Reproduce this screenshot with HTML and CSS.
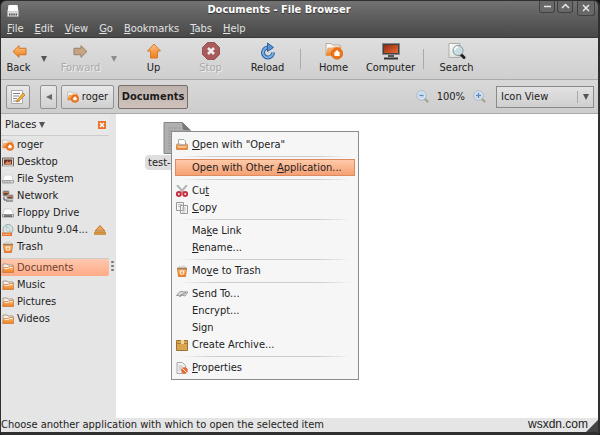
FILE: index.html
```html
<!DOCTYPE html>
<html lang="en">
<head>
<meta charset="utf-8">
<title>Documents - File Browser</title>
<link rel="stylesheet" href="styles.css">
</head>
<body>
<svg class="defs" aria-hidden="true">
  <defs>
    <linearGradient id="orange" x1="0" y1="0" x2="0" y2="1"><stop offset="0" stop-color="#fbc386"/><stop offset="1" stop-color="#ef7d17"/></linearGradient>
    <linearGradient id="paper" x1="0" y1="0" x2="1" y2="1"><stop offset="0" stop-color="#fff"/><stop offset="1" stop-color="#d4d4d0"/></linearGradient>
    <linearGradient id="screen" x1="0" y1="0" x2="1" y2="1"><stop offset="0" stop-color="#8d2c10"/><stop offset="1" stop-color="#ee6c35"/></linearGradient>
    <symbol id="folder" viewBox="0 0 12 12"><path d="M1 10V2h4l1 1h5v3" fill="#f7efe7" stroke="#a99787"/><path d="M.7 10.5 2 5.5h4l1-1h4.5v6z" fill="url(#orange)" stroke="#c67438" stroke-width=".7"/><path d="M2.5 6.4h4l1-1h3.2" fill="none" stroke="#fff0dc"/></symbol>
    <symbol id="home" viewBox="0 0 18 18"><path d="M1 13V1.5h5L7.500 3H15v9z" fill="#fbf7f2" stroke="#b8a99d"/><path d="M1 13.500 3 6h5l1-1h7l-1 8.500z" fill="url(#orange)" stroke="#df9151" stroke-width=".6"/><circle cx="12" cy="11.500" r="5.700" fill="#ef7418" stroke="#d95b08" stroke-width=".6"/><path d="M8.500 11.500 12 8l3.500 3.500h-1V14h-5v-2.500z" fill="#fff"/></symbol>
    <symbol id="drive" viewBox="0 0 12 12"><path d="M2.500 2h7l2 5.500H.5z" fill="#fdfdfd" stroke="#c5c5c5" stroke-width=".6"/><path d="M.5 7.500h11V10H.5z" fill="#dcdcdc" stroke="#888" stroke-width=".7"/><path d="M2 9h7" stroke="#888" stroke-dasharray="1 .6"/></symbol>
    <symbol id="floppy" viewBox="0 0 12 12"><path d="M2.500 2h7l2 5.500H.5z" fill="#fff" stroke="#bbb" stroke-width=".6"/><path d="M.5 7.500h11V10H.5z" fill="#ddd" stroke="#777" stroke-width=".7"/><path d="M2 9h8" stroke="#222"/></symbol>
    <symbol id="desktop" viewBox="0 0 12 12"><path d="M.5 2h11v8H.5z" fill="#d9d0c8" stroke="#6e625c"/><path d="M2 3.500h8v5H2z" fill="#6c3328"/><path d="m2.500 8 3-3 1.500 1.500L9 4.500V8z" fill="#df8a5b"/><path d="M1 10h10" stroke="#eee"/></symbol>
    <symbol id="network" viewBox="0 0 12 12"><path d="M1 1h6v5H1zM5 5h6v4H5z" fill="#704737" stroke="#aaa"/><path d="M2 2.500h4M6 6.500h4" stroke="#cd7b51"/><path d="M2 7v3h3M4 11h7" fill="none" stroke="#555"/></symbol>
    <symbol id="disc" viewBox="0 0 12 12"><circle cx="6" cy="5.500" r="5" fill="#d9e4e4" stroke="#9daaaa"/><path d="M6 5.500 2 2l3-1.500zM6 5.500 10.500 8 8 10z" fill="#9fd5d6"/><circle cx="6" cy="5.500" r="1.500" fill="#fff" stroke="#999" stroke-width=".6"/><path d="M0 8.500h10V12H0z" fill="#ea742f"/><path d="M1 10.300h7" stroke="#ffd7b9" stroke-dasharray="1 .5"/></symbol>
    <symbol id="trash" viewBox="0 0 12 12"><path d="M1.500 4h9l-1 7.500h-7z" fill="url(#orange)" stroke="#c7682b" stroke-width=".7"/><path d="m2 3 2-2 2 1 2-1.500L10 3z" fill="#f7f3ed" stroke="#aaa" stroke-width=".5"/><path d="M1 3.500h10" stroke="#a87b58" stroke-width="1.500"/><circle cx="6" cy="7.500" r="1.800" fill="none" stroke="#fff1dd" stroke-width="1.100"/></symbol>
    <symbol id="arrow" viewBox="0 0 16 14"><path d="M1 7 7.500.7v2.800H15v7H7.500v2.800z"/></symbol>
    <symbol id="zoom-glass" viewBox="0 0 13 13"><path d="m8.500 8.500 3 3" stroke="#a6a391" stroke-width="2.200" stroke-linecap="round"/><circle cx="5.500" cy="5.500" r="4.700" fill="#e9f1f7" stroke="#9fb2c4"/><circle cx="5.500" cy="5.500" r="3.300" fill="#c3d8ec"/></symbol>
  </defs>
</svg>

<div class="window">
  <header class="chrome">
    <div class="titlebar">
      <svg class="app-icon" viewBox="0 0 12 12" aria-hidden="true"><path d="M1.500 0h9l1 7H.5z" fill="#fff"/><path d="M.5 6.500h11v5H.5z" fill="#ddd" stroke="#aaa" stroke-width=".5"/><path d="M2 9.500h8" stroke="#555" stroke-width="2" stroke-dasharray="1.500 .7"/></svg>
      <h1 class="title">Documents - File Browser</h1>
      <div class="controls">
        <button class="control" aria-label="Minimize"><svg viewBox="0 0 14 11"><path d="M4 5.500h7"/></svg></button>
        <button class="control" aria-label="Maximize"><svg viewBox="0 0 14 11"><path d="m4 7 3.500-3.500L11 7"/></svg></button>
        <button class="control close-window" aria-label="Close"><svg viewBox="0 0 16 14"><path d="m5 4 6 6m0-6-6 6"/></svg></button>
      </div>
    </div>
    <nav class="menubar" aria-label="Menu bar">
      <button><u>F</u>ile</button><button><u>E</u>dit</button><button><u>V</u>iew</button><button><u>G</u>o</button><button><u>B</u>ookmarks</button><button><u>T</u>abs</button><button><u>H</u>elp</button>
    </nav>
  </header>

  <div class="toolbar" role="toolbar" aria-label="Navigation">
    <button class="tool narrow"><svg class="tool-icon" viewBox="0 0 18 18"><use href="#arrow" x="2" y="3" width="15" height="13" fill="url(#orange)" stroke="#cf6d19"/></svg>Back</button>
    <button class="history" aria-label="Back history"><svg viewBox="0 0 6 6"><path d="M0 0h6L3 6z"/></svg></button>
    <button class="tool" disabled><svg class="tool-icon" viewBox="0 0 18 18"><g transform="matrix(-1 0 0 1 18 0)"><use href="#arrow" x="2" y="3" width="15" height="13" fill="#c4a482" stroke="#967c63"/></g></svg>Forward</button>
    <button class="history dim" aria-label="Forward history"><svg viewBox="0 0 6 6"><path d="M0 0h6L3 6z"/></svg></button>
    <button class="tool"><svg class="tool-icon" viewBox="0 0 18 18"><path d="m9 2 6.500 7H12.500v7h-7V9H2.500z" fill="url(#orange)" stroke="#d77a2d"/></svg>Up</button>
    <button class="tool" disabled><svg class="tool-icon" viewBox="0 0 18 18"><path d="M5.500.5h7l5 5v7l-5 5h-7l-5-5v-7z" fill="#a95b5b" stroke="#955555"/><path d="m6 6 6 6m0-6-6 6" stroke="#eee" stroke-width="2.500"/></svg>Stop</button>
    <button class="tool"><svg class="tool-icon" viewBox="0 0 18 18"><path d="M14 10.500A5 5 0 1 1 9.500 5.500" fill="none" stroke="#2e5f9f" stroke-width="4"/><path d="M14 10.500A5 5 0 1 1 9.500 5.500" fill="none" stroke="#79aee5" stroke-width="2"/><path d="m8.500 1 6 4.500-6 4z" fill="#5b94d4" stroke="#2e5f9f"/></svg>Reload</button>
    <span class="divider"></span>
    <button class="tool"><svg class="tool-icon"><use href="#home"/></svg>Home</button>
    <button class="tool"><svg class="tool-icon" viewBox="0 0 18 18"><path d="M.5 1.500h17v11H.5z" fill="#424242" stroke="#888"/><path d="M2 3h14v8H2z" fill="url(#screen)"/><path d="M6 13h6v2H6z" fill="#555"/><path d="M2 16.500h14" stroke="#333" stroke-width="2"/></svg>Computer</button>
    <span class="divider"></span>
    <button class="tool"><svg class="tool-icon" viewBox="0 0 18 18"><path d="M1 1.500h11v14H1z" fill="url(#paper)" stroke="#aaa"/><path d="m12.500 12 3.500 3.500" stroke="#222" stroke-width="3" stroke-linecap="round"/><circle cx="10" cy="8.500" r="5" fill="#c9dde4" stroke="#8b9799"/><path d="M7 8a3 3 0 0 1 3-3" fill="none" stroke="#fff" stroke-width="1.500"/></svg>Search</button>
  </div>

  <div class="locationbar">
    <button class="loc edit" aria-label="Edit location"><svg viewBox="0 0 16 16"><path d="M1.500 1.500h11v13h-11z" fill="#fff" stroke="#aaa"/><path d="M3 4.500h7M3 7h6M3 9.500h4M3 12h7" stroke="#888"/><path d="m7 11 6-7 2 2-6 6-2.500 1z" fill="#f5ad35" stroke="#a87227" stroke-width=".7"/></svg></button>
    <div class="path">
      <button class="loc scroll" aria-label="Earlier folders"><svg viewBox="0 0 6 6"><path d="M6 0v6L0 3z"/></svg></button>
      <button class="loc folder"><svg class="icon"><use href="#home"/></svg>roger</button>
      <button class="loc current" aria-pressed="true">Documents</button>
    </div>
    <div class="zoom">
      <button aria-label="Zoom out"><svg viewBox="0 0 13 13"><use href="#zoom-glass"/><path d="M3.500 5.500h4" stroke="#5b87b7" stroke-width="1.200"/></svg></button>
      <span>100%</span>
      <button aria-label="Zoom in"><svg viewBox="0 0 13 13"><use href="#zoom-glass"/><path d="M3 5.500h5M5.500 3v5" stroke="#5b87b7" stroke-width="1.200"/></svg></button>
    </div>
    <div class="view">
      <select aria-label="View mode"><option>Icon View</option><option>List View</option></select>
      <svg class="view-arrow" viewBox="0 0 6 6" aria-hidden="true"><path d="M0 0h6L3 6z"/></svg>
    </div>
  </div>

  <div class="content">
    <aside class="sidebar">
      <div class="side-head">
        <button class="places">Places <svg viewBox="0 0 6 6"><path d="M0 0h6L3 6z"/></svg></button>
        <button class="close-side" aria-label="Close side pane"><svg viewBox="0 0 8 8"><path d="M0 0h8v8H0z" fill="#e9722b"/><path d="m2 2 4 4m0-4L2 6" stroke="#fff" stroke-width="1.500"/></svg></button>
      </div>
      <nav class="place-list" aria-label="Places">
        <a href="#"><svg class="icon"><use href="#home"/></svg>roger</a>
        <a href="#"><svg class="icon"><use href="#desktop"/></svg>Desktop</a>
        <a href="#"><svg class="icon"><use href="#drive"/></svg>File System</a>
        <a href="#"><svg class="icon"><use href="#network"/></svg>Network</a>
        <a href="#"><svg class="icon"><use href="#floppy"/></svg>Floppy Drive</a>
        <a href="#"><svg class="icon"><use href="#disc"/></svg>Ubuntu 9.04...<svg class="icon eject" viewBox="0 0 12 12"><path d="m6 1.500 5 5.500H1z" fill="#e7a158" stroke="#bd782f"/><path d="M.5 8h11v2.500H.5z" fill="#dc943f" stroke="#ba782f" stroke-width=".6"/></svg></a>
        <a href="#"><svg class="icon"><use href="#trash"/></svg>Trash</a>
      </nav>
      <nav class="place-list bookmarks" aria-label="Bookmarks">
        <a href="#" class="selected" aria-current="page"><svg class="icon"><use href="#folder"/></svg>Documents</a>
        <a href="#"><svg class="icon"><use href="#folder"/></svg>Music</a>
        <a href="#"><svg class="icon"><use href="#folder"/></svg>Pictures</a>
        <a href="#"><svg class="icon"><use href="#folder"/></svg>Videos</a>
      </nav>
    </aside>
    <div class="splitter"><i></i><i></i><i></i></div>
    <main class="files">
      <div class="file">
        <svg viewBox="0 0 28 32" aria-hidden="true"><path d="M1 .5h18.500l8 8v23H1z" fill="#b0b0b0" stroke="#858585"/><path d="M5 6h12M5 9h14M5 12h18M5 15h18M5 18h18M5 21h18M5 24h18M5 27h18" stroke="#989898" stroke-dasharray="5 1 3 1"/><path d="M19 .5 20 8l7.500.5z" fill="#777"/></svg>
        <span>test-</span>
      </div>
      <div class="context" role="menu">
        <button role="menuitem"><svg class="icon" viewBox="0 0 12 12"><path d="M2.500 5V.5H8L9.500 2v4z" fill="#fff" stroke="#aaa"/><path d="M.5 10.500v-5l2-1v2h7v-2l2 1v5z" fill="url(#orange)" stroke="#b97b4a" stroke-width=".7"/><path d="M2 8h8" stroke="#ffe4c7"/></svg><span><u>O</u>pen with "Opera"</span></button>
        <hr>
        <button role="menuitem" class="active"><span class="icon"></span><span>Open with Other <u>A</u>pplication...</span></button>
        <hr>
        <button role="menuitem"><svg class="icon" viewBox="0 0 12 12"><path d="m1 0 7 8M11 0 4 8" stroke="#b4b4b4" stroke-width="2"/><circle cx="2.800" cy="9" r="2" fill="#eee" stroke="#c7303e" stroke-width="2"/><circle cx="9.200" cy="9" r="2" fill="#eee" stroke="#c7303e" stroke-width="2"/></svg><span>Cu<u>t</u></span></button>
        <button role="menuitem"><svg class="icon" viewBox="0 0 12 12"><path d="M.5.5h7v8h-7zM4.500 3.500h7v8h-7z" fill="#f7f7f7" stroke="#999"/><path d="M2 2.500h4M2 4.500h2M6 6h4M6 8h4M6 10h3" stroke="#bbb"/></svg><span><u>C</u>opy</span></button>
        <hr>
        <button role="menuitem"><span class="icon"></span><span>Ma<u>k</u>e Link</span></button>
        <button role="menuitem"><span class="icon"></span><span><u>R</u>ename...</span></button>
        <hr>
        <button role="menuitem"><svg class="icon"><use href="#trash"/></svg><span>Mo<u>v</u>e to Trash</span></button>
        <hr>
        <button role="menuitem"><svg class="icon" viewBox="0 0 12 12"><path d="M.5 7.500 4 3.500l8 .5-3 4-3-1-2 2-.5-1.500z" fill="#ddd" stroke="#888" stroke-width=".8"/><path d="m4 7.500 6-3" stroke="#888"/></svg><span>Send To...</span></button>
        <button role="menuitem"><span class="icon"></span><span>Encrypt...</span></button>
        <button role="menuitem"><span class="icon"></span><span>Sign</span></button>
        <button role="menuitem"><svg class="icon" viewBox="0 0 12 12"><path d="M.5 1.500h11v10H.5z" fill="#d9a44c" stroke="#9c7536"/><path d="M1 4.500h10" stroke="#ad7d32"/><path d="M5 1h3v4H5z" fill="#f1d397"/></svg><span>Create Archive...</span></button>
        <hr>
        <button role="menuitem"><svg class="icon" viewBox="0 0 12 12"><path d="M1 .5h5.500l3 3v8H1z" fill="#f2f2f2" stroke="#aaa"/><path d="M2.500 4h4M2.500 6h5M2.500 8h4" stroke="#bbb"/><circle cx="8.500" cy="8.500" r="3.200" fill="#ea6c34"/><path d="m6.500 6.500 4 4" stroke="#fff"/></svg><span><u>P</u>roperties</span></button>
      </div>
    </main>
  </div>

  <footer class="statusbar"><span>Choose another application with which to open the selected item</span><span class="mark">wsxdn.com</span></footer>
</div>
</body>
</html>
```
FILE: styles.css
```css
* { box-sizing: border-box; }

body {
  margin: 0;
  background: #151515;
  color: #222;
  font: 11px/17px "DejaVu Sans Condensed", "DejaVu Sans", sans-serif;
}

button, select {
  margin: 0;
  padding: 0;
  border: 0;
  background: none;
  color: inherit;
  font: inherit;
}

svg { display: block; flex: none; }
u { text-underline-offset: 1px; }
.defs { position: absolute; width: 0; height: 0; }
.icon { width: 12px; height: 12px; flex: none; }

.window {
  display: flex;
  flex-direction: column;
  min-height: 100vh;
  border: solid #303030;
  border-width: 1px 2px 3px 1px;
  border-radius: 6px 6px 3px 3px;
  overflow: hidden;
}

/* Title and menu */
.chrome {
  background: linear-gradient(#737373, #606060 40%, #484848);
  border-bottom: 1px solid #383838;
  color: #e2e2e2;
}
.titlebar {
  display: flex;
  height: 19px;
  padding: 0 3px 0 6px;
}
.app-icon { width: 12px; height: 12px; margin-top: 4px; }
.title {
  flex: 1;
  margin: 0;
  color: #fff;
  font-size: 11px;
  line-height: 18px;
  text-align: center;
  text-shadow: 0 1px 1px #333;
}
.controls { display: flex; gap: 2px; align-items: flex-start; }
.control {
  border: 1px solid #414141;
  border-top: 0;
  border-radius: 0 0 3px 3px;
  background: #686868;
}
.control svg { width: 14px; height: 11px; fill: none; stroke: #e8e8e8; stroke-width: 1.5px; }
.control.close-window { margin-left: 2px; }
.control.close-window svg { width: 16px; height: 14px; }
.menubar { display: flex; gap: 11px; height: 17px; padding-left: 6px; }
.menubar button { line-height: 16px; }

/* Main toolbar */
.toolbar {
  display: flex;
  align-items: center;
  height: 42px;
  background: linear-gradient(#dedede, #cfcfcf);
  border-bottom: 1px solid #aaa;
}
.tool {
  display: flex;
  flex-direction: column;
  align-items: center;
  width: 57px;
  line-height: 15px;
}
.tool.narrow { width: 35px; }
.tool-icon { width: 18px; height: 18px; }
.tool:disabled { color: #aaa; text-shadow: 1px 1px #eee; }
.history { display: flex; justify-content: center; width: 16px; }
.history svg { width: 6px; height: 6px; fill: #555; }
.history.dim { justify-content: flex-start; padding-left: 2px; }
.history.dim svg { fill: #8d8d8d; }
.divider { width: 1px; height: 20px; margin: 0 4px; background: #aaa; }

/* Location bar */
.locationbar {
  display: flex;
  align-items: center;
  height: 34px;
  padding: 0 4px 0 5px;
  background: linear-gradient(#d8d8d8, #cdcdcd);
  border-bottom: 1px solid #aaa;
}
.loc {
  display: flex;
  align-items: center;
  justify-content: center;
  gap: 3px;
  height: 24px;
  border: 1px solid #929292;
  border-radius: 2px;
  background: linear-gradient(#e8e8e8, #d0d0d0);
}
.edit { width: 24px; }
.edit svg { width: 16px; height: 16px; }
.path { display: flex; gap: 4px; margin-left: 10px; }
.scroll { width: 17px; }
.scroll svg { width: 6px; height: 6px; fill: #666; }
.folder { width: 53px; }
.current {
  width: 70px;
  background: linear-gradient(#bdb2ad, #cfc2bc);
  border-color: #766e6a;
  font-weight: bold;
  color: #1c1c1c;
}
.zoom { display: flex; align-items: center; gap: 8px; margin-left: auto; }
.zoom svg { width: 13px; height: 13px; }
.view { position: relative; width: 98px; margin-left: 10px; }
.view select {
  display: block;
  width: 100%;
  height: 22px;
  padding-left: 4px;
  appearance: none;
  border: 1px solid #8a8a8a;
  background: linear-gradient(#e2e2e2, #cfcfcf);
}
.view-arrow {
  position: absolute;
  right: 5px;
  top: 5px;
  width: 12px;
  height: 12px;
  padding: 3px 0 3px 5px;
  border-left: 1px solid #aaa;
  fill: #555;
  pointer-events: none;
}

/* Body */
.content { display: flex; flex: 1; background: #fff; }
.sidebar { width: 108px; background: #e5e5e5; }
.side-head {
  display: flex;
  align-items: center;
  justify-content: space-between;
  height: 22px;
  padding: 0 3px 0 4px;
  background: #e8e8e8;
  border-bottom: 1px solid #ccc;
}
.places { display: flex; align-items: center; gap: 3px; }
.places svg { width: 6px; height: 6px; fill: #555; }
.close-side svg { width: 8px; height: 8px; }
.place-list a {
  display: flex;
  align-items: center;
  gap: 3px;
  height: 17px;
  padding-left: 1px;
  color: inherit;
  text-decoration: none;
}
.eject { margin-left: auto; margin-right: 3px; }
.bookmarks { margin-top: 3px; border-top: 1px solid #ccc; }
.place-list .selected {
  border-radius: 0 2px 2px 0;
  background: linear-gradient(#ffc8ae, #ffab87);
  color: #6d4032;
}
.splitter {
  display: flex;
  flex-direction: column;
  align-items: center;
  justify-content: center;
  gap: 2px;
  width: 7px;
  background: #e5e5e5;
}
.splitter i { width: 3px; height: 2px; border-radius: 1px; background: #777; }
.files { position: relative; flex: 1; }
.file {
  display: flex;
  flex-direction: column;
  align-items: center;
  gap: 1px;
  width: 64px;
  margin: 8px 0 0 29px;
}
.file svg { width: 28px; height: 32px; }
.file span { width: 100%; padding: 0 3px; border-radius: 4px; background: #dedede; line-height: 15px; white-space: nowrap; }

/* Context menu */
.context {
  position: absolute;
  left: 55px;
  top: 17px;
  width: 188px;
  padding: 4px 3px 3px;
  border: 1px solid #8c8c8c;
  background: #f6f6f6;
}
.context button {
  display: flex;
  align-items: center;
  gap: 4px;
  width: 100%;
  height: 17px;
  padding-left: 1px;
  text-align: left;
}
.context .active {
  border: 1px solid #dd8c62;
  padding-left: 0;
  background: linear-gradient(#ffc9a8, #f5a073);
}
.context hr {
  height: 6px;
  margin: 0 4px;
  border: 0;
  background: linear-gradient(90deg, transparent, #ccc 20%, #ccc 80%, transparent) center / 100% 1px no-repeat;
}

/* Status bar */
.statusbar {
  display: flex;
  justify-content: space-between;
  height: 14px;
  padding-right: 10px;
  background: linear-gradient(135deg, transparent calc(100% - 9px), #444 calc(100% - 8px)), #e5e5e5;
  line-height: 13px;
}
.mark { color: #222; font: 12px/13px "Liberation Sans", Arial, sans-serif; }
```
